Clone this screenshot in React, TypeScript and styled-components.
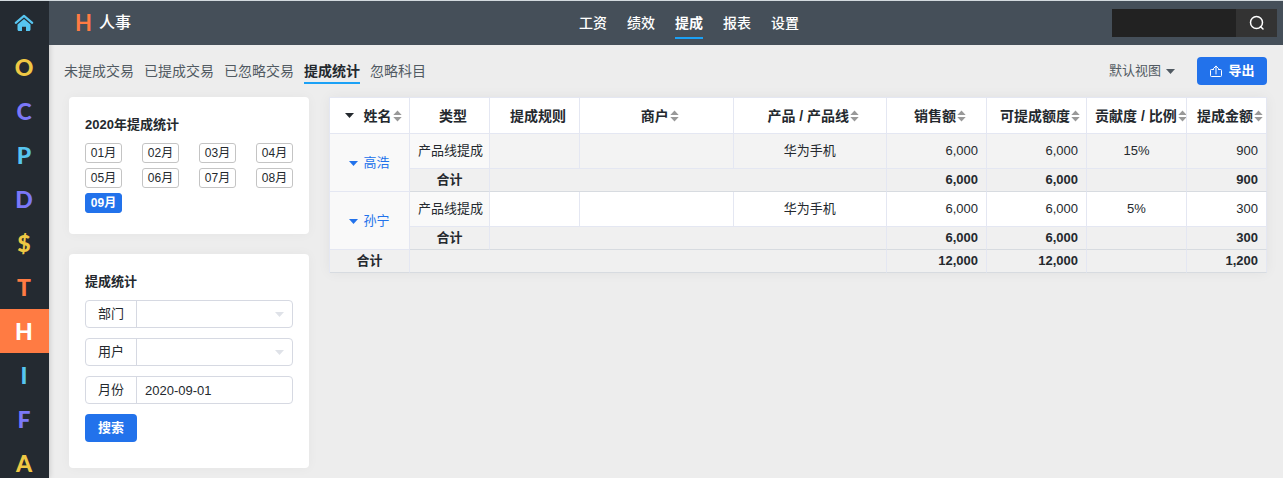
import React from 'react';
import styled, { createGlobalStyle, css } from 'styled-components';

const GlobalStyle = createGlobalStyle`
  *, *::before, *::after { box-sizing: border-box; }
  body {
    margin: 0;
    background: #ededed;
    color: #24292e;
    font: 13px/20px "Liberation Sans", "Noto Sans CJK SC", sans-serif;
  }
  button, input, select { font: inherit; color: inherit; margin: 0; }
  a { color: inherit; text-decoration: none; }
  h1, h2 { margin: 0; }
`;

const Shell = styled.div`
  display: flex;
  height: 100vh;
  overflow: hidden;
  border-top: 1px solid #d3dade;
`;

const Sidebar = styled.nav`
  flex: none;
  width: 49px;
  overflow: hidden;
  background: #242a31;
  box-shadow: 0 0 6px rgba(0, 0, 0, 0.2);
`;

const SideLink = styled.a<{ $color: string; $active?: boolean }>`
  display: flex;
  align-items: center;
  justify-content: center;
  height: 44px;
  padding-right: 1px;
  color: ${p => (p.$active ? '#fff' : p.$color)};
  background: ${p => (p.$active ? '#ff7b43' : 'transparent')};
  font: 900 23px/44px Lato, sans-serif;
`;

const Page = styled.div`
  flex: 1;
  min-width: 0;
  overflow: auto;
`;

const TopBar = styled.header`
  display: flex;
  align-items: center;
  height: 44px;
  padding-right: 6px;
  background: #454f59;
  color: #fff;
`;

const Brand = styled.div`
  display: flex;
  align-items: center;
  gap: 7px;
  flex: 0 0 217px;
  padding-left: 26px;
`;

const BrandMark = styled.span`
  color: #ff7b43;
  font: 700 22px/44px Lato, sans-serif;
`;

const BrandName = styled.h1`
  font-size: 16px;
  font-weight: 500;
  line-height: 24px;
`;

const TopNav = styled.nav`
  display: flex;
  flex: 1;
  justify-content: center;
  gap: 20px;
`;

const underline = css`
  border-bottom: 2px solid #1ba1f6;
  font-weight: 700;
`;

const TopLink = styled.a<{ $active?: boolean }>`
  height: 32px;
  font-size: 14px;
  font-weight: 500;
  line-height: 32px;
  white-space: nowrap;
  ${p => p.$active && underline}
`;

const Search = styled.form`
  display: flex;
  height: 28px;
`;

const SearchInput = styled.input`
  width: 124px;
  padding: 0 8px;
  border: 0;
  background: #222;
`;

const SearchButton = styled.button`
  display: flex;
  align-items: center;
  justify-content: center;
  width: 41px;
  padding: 0;
  border: 0;
  background: #333;
`;

const Toolbar = styled.div`
  display: flex;
  align-items: center;
  height: 52px;
  padding: 0 16px 0 15px;
`;

const Tabs = styled.nav`
  display: flex;
  flex: 1;
  gap: 10px;
`;

const Tab = styled.a<{ $active?: boolean }>`
  height: 26px;
  color: ${p => (p.$active ? '#24292e' : '#515a62')};
  font-size: 14px;
  line-height: 26px;
  white-space: nowrap;
  ${p => p.$active && underline}
`;

const ViewButton = styled.button`
  display: flex;
  align-items: center;
  gap: 5px;
  margin-right: 22px;
  padding: 0;
  border: 0;
  background: none;
  color: #515a62;
`;

const PrimaryButton = styled.button<{ $width: number }>`
  display: flex;
  align-items: center;
  justify-content: center;
  gap: 5px;
  width: ${p => p.$width}px;
  height: 28px;
  padding: 0;
  border: 0;
  border-radius: 4px;
  background: #2272eb;
  color: #fff;
  font-weight: 700;
`;

const Content = styled.main`
  display: flex;
  align-items: flex-start;
  gap: 20px;
  padding: 0 16px 10px 20px;
`;

const Aside = styled.aside`
  display: flex;
  flex-direction: column;
  gap: 20px;
  flex: none;
  width: 240px;
`;

const Card = styled.section<{ $bottom: number }>`
  padding: 16px 16px ${p => p.$bottom}px;
  border-radius: 4px;
  background: #fff;
  box-shadow: 0 0 12px rgba(0, 0, 0, 0.04);
`;

const CardTitle = styled.h2`
  margin-bottom: 6px;
  font-size: 13px;
  line-height: 24px;
`;

const Months = styled.div`
  display: flex;
  flex-wrap: wrap;
  gap: 5px 20px;
`;

const Month = styled.button<{ $active?: boolean }>`
  width: 37px;
  height: 20px;
  padding: 0;
  border: 1px solid ${p => (p.$active ? '#2272eb' : '#c4c4c4')};
  border-radius: 3px;
  background: ${p => (p.$active ? '#2272eb' : '#fff')};
  color: ${p => (p.$active ? '#fff' : '#24292e')};
  font-size: 12px;
  font-weight: ${p => (p.$active ? 700 : 400)};
  line-height: 18px;
`;

const Fields = styled.form`
  display: flex;
  flex-direction: column;
  align-items: stretch;
  gap: 10px;
`;

const Field = styled.div`
  display: flex;
  align-items: center;
  height: 28px;
  border: 1px solid #d6d9e2;
  border-radius: 4px;
`;

const FieldLabel = styled.label`
  width: 51px;
  border-right: 1px solid #d6d9e2;
  line-height: 26px;
  text-align: center;
`;

const TextInput = styled.input`
  flex: 1;
  min-width: 0;
  height: 26px;
  padding: 0 8px;
  border: 0;
  background: none;
`;

const SelectWrap = styled.div`
  display: grid;
  flex: 1;
  align-items: center;
  color: #dfe2e8;

  > * { grid-area: 1 / 1; }
  > svg { justify-self: end; margin-right: 8px; pointer-events: none; }
`;

const Select = styled.select`
  width: 100%;
  height: 26px;
  padding: 0 24px 0 8px;
  border: 0;
  background: none;
  color: #24292e;
  appearance: none;
`;

const Table = styled.table`
  flex: 1;
  width: 0;
  min-width: 880px;
  table-layout: fixed;
  border-collapse: separate;
  border-spacing: 0;
  border-left: 1px solid #e4e7f2;
  box-shadow: 0 0 12px rgba(0, 0, 0, 0.05);
`;

const Col = styled.col<{ $width?: number }>`
  width: ${p => (p.$width ? `${p.$width}px` : 'auto')};
`;

const HeadCell = styled.th`
  height: 37px;
  padding: 0 1px 0 8px;
  overflow: hidden;
  border: solid #e4e7f2;
  border-width: 1px 1px 1px 0;
  background: #fff;
  font-size: 14px;
  white-space: nowrap;
`;

const HeadContent = styled.span`
  display: flex;
  align-items: center;
  justify-content: safe center;
  gap: 1px;

  > svg { flex: none; }
`;

const HeadToggle = styled.button`
  display: flex;
  align-items: center;
  gap: 10px;
  padding: 0;
  border: 0;
  background: none;
`;

type Align = 'left' | 'center' | 'right';

const Cell = styled.td<{ $align?: Align; $bg?: string; $total?: boolean }>`
  height: ${p => (p.$total ? 23 : 35)}px;
  padding: 0 8px;
  border: solid #e4e7f2;
  border-width: 0 1px 1px 0;
  border-bottom-color: ${p => (p.$total ? '#d7dbe0' : '#e4e7f2')};
  background: ${p => (p.$total ? '#f0f0f0' : p.$bg || '#fff')};
  font-weight: ${p => (p.$total ? 700 : 400)};
  text-align: ${p => p.$align || 'center'};
  white-space: nowrap;
`;

const PersonButton = styled.button`
  display: inline-flex;
  align-items: center;
  gap: 5px;
  padding: 0;
  border: 0;
  background: none;
  color: #2272eb;
`;

const Caret = () => (
  <svg width="9" height="5" viewBox="0 0 9 5" fill="currentColor" aria-hidden="true">
    <path d="M0 0h9L4.500 5z" />
  </svg>
);

const Sort = () => (
  <svg width="9" height="12" viewBox="0 0 9 12" fill="#999" aria-hidden="true">
    <path d="M4.500 0.500L8.700 5H0.300zM0.300 7h8.400l-4.200 4.500z" />
  </svg>
);

const Home = () => (
  <svg width="20" height="18" viewBox="0 0 20 18" aria-hidden="true">
    <path d="M1.800 8.800L10 1.800l8.200 7" fill="none" stroke="#57c5f0" strokeWidth="2.200" strokeLinecap="round" strokeLinejoin="round" />
    <path d="M10 4.900l6.500 5.500v5.100c0 .9-.6 1.500-1.500 1.500h-3v-4.200H8V17H5c-.9 0-1.500-.6-1.500-1.500v-5.100z" fill="#57c5f0" />
  </svg>
);

const SearchIcon = () => (
  <svg width="16" height="16" viewBox="0 0 16 16" fill="none" stroke="#fff" strokeWidth="1.500" aria-hidden="true">
    <circle cx="7.500" cy="7.500" r="6" />
    <path d="M11.500 11.500l2.500 2.500" strokeLinecap="round" />
  </svg>
);

const ExportIcon = () => (
  <svg width="14" height="13" viewBox="0 0 14 13" fill="none" stroke="#fff" strokeLinecap="round" strokeLinejoin="round" aria-hidden="true">
    <path d="M4.500 4.500H2.500c-.8 0-1 .3-1 1v5c0 .7.300 1 1 1h9c.7 0 1-.3 1-1v-5c0-.7-.3-1-1-1h-2M7 9V1.200M4.500 3.500L7 1l2.500 2.500" />
  </svg>
);

const sideItems = [
  { text: 'O', color: '#efc844' },
  { text: 'C', color: '#7b78f8' },
  { text: 'P', color: '#57c5f0' },
  { text: 'D', color: '#7b78f8' },
  { text: '$', color: '#efc844' },
  { text: 'T', color: '#ff7b43' },
  { text: 'H', color: '#ff7b43' },
  { text: 'I', color: '#57c5f0' },
  { text: 'F', color: '#7b78f8' },
  { text: 'A', color: '#efc844' },
];

const months = ['01月', '02月', '03月', '04月', '05月', '06月', '07月', '08月', '09月'];
const widths = [80, 80, 90, undefined, undefined, 100, 100, 100, 80];

const headers = [
  { text: '类型' },
  { text: '提成规则' },
  { text: '商户', sort: true },
  { text: '产品 / 产品线', sort: true },
  { text: '销售额', sort: true },
  { text: '可提成额度', sort: true },
  { text: '贡献度 / 比例', sort: true },
  { text: '提成金额', sort: true },
];

const people = [
  { name: '高浩', sales: '6,000', base: '6,000', rate: '15%', amount: '900', bg: '#f3f3f3' },
  { name: '孙宁', sales: '6,000', base: '6,000', rate: '5%', amount: '300', bg: '#fff' },
];

export default function App() {
  return (
    <>
      <GlobalStyle />
      <Shell>
        <Sidebar>
          <SideLink href="#" $color="#57c5f0" aria-label="首页"><Home /></SideLink>
          {sideItems.map(i => (
            <SideLink key={i.text} href="#" $color={i.color} $active={i.text === 'H'}>{i.text}</SideLink>
          ))}
        </Sidebar>
        <Page>
          <TopBar>
            <Brand>
              <BrandMark>H</BrandMark>
              <BrandName>人事</BrandName>
            </Brand>
            <TopNav>
              {['工资', '绩效', '提成', '报表', '设置'].map(t => (
                <TopLink key={t} href="#" $active={t === '提成'}>{t}</TopLink>
              ))}
            </TopNav>
            <Search>
              <SearchInput type="text" aria-label="搜索" />
              <SearchButton type="button" aria-label="搜索"><SearchIcon /></SearchButton>
            </Search>
          </TopBar>
          <Toolbar>
            <Tabs>
              {['未提成交易', '已提成交易', '已忽略交易', '提成统计', '忽略科目'].map(t => (
                <Tab key={t} href="#" $active={t === '提成统计'}>{t}</Tab>
              ))}
            </Tabs>
            <ViewButton type="button">默认视图<Caret /></ViewButton>
            <PrimaryButton type="button" $width={70}><ExportIcon />导出</PrimaryButton>
          </Toolbar>
          <Content>
            <Aside>
              <Card $bottom={21}>
                <CardTitle>2020年提成统计</CardTitle>
                <Months>
                  {months.map(m => (
                    <Month key={m} type="button" $active={m === '09月'}>{m}</Month>
                  ))}
                </Months>
              </Card>
              <Card $bottom={26}>
                <CardTitle>提成统计</CardTitle>
                <Fields>
                  <Field>
                    <FieldLabel htmlFor="department">部门</FieldLabel>
                    <SelectWrap><Select id="department" /><Caret /></SelectWrap>
                  </Field>
                  <Field>
                    <FieldLabel htmlFor="user">用户</FieldLabel>
                    <SelectWrap><Select id="user" /><Caret /></SelectWrap>
                  </Field>
                  <Field>
                    <FieldLabel htmlFor="month">月份</FieldLabel>
                    <TextInput id="month" type="text" defaultValue="2020-09-01" />
                  </Field>
                  <PrimaryButton type="button" $width={52}>搜索</PrimaryButton>
                </Fields>
              </Card>
            </Aside>
            <Table>
              <colgroup>
                {widths.map((w, i) => <Col key={i} $width={w} />)}
              </colgroup>
              <thead>
                <tr>
                  <HeadCell scope="col">
                    <HeadContent>
                      <HeadToggle type="button"><Caret />姓名</HeadToggle>
                      <Sort />
                    </HeadContent>
                  </HeadCell>
                  {headers.map(h => (
                    <HeadCell key={h.text} scope="col">
                      <HeadContent>{h.text}{h.sort && <Sort />}</HeadContent>
                    </HeadCell>
                  ))}
                </tr>
              </thead>
              <tbody>
                {people.map(p => (
                  <React.Fragment key={p.name}>
                    <tr>
                      <Cell rowSpan={2} $bg="#f9f9f9">
                        <PersonButton type="button"><Caret />{p.name}</PersonButton>
                      </Cell>
                      <Cell $bg="#f9f9f9">产品线提成</Cell>
                      <Cell $bg={p.bg} />
                      <Cell $bg={p.bg} />
                      <Cell $bg={p.bg}>华为手机</Cell>
                      <Cell $bg={p.bg} $align="right">{p.sales}</Cell>
                      <Cell $bg={p.bg} $align="right">{p.base}</Cell>
                      <Cell $bg={p.bg}>{p.rate}</Cell>
                      <Cell $bg={p.bg} $align="right">{p.amount}</Cell>
                    </tr>
                    <tr>
                      <Cell $total>合计</Cell>
                      <Cell $total colSpan={3} />
                      <Cell $total $align="right">{p.sales}</Cell>
                      <Cell $total $align="right">{p.base}</Cell>
                      <Cell $total />
                      <Cell $total $align="right">{p.amount}</Cell>
                    </tr>
                  </React.Fragment>
                ))}
                <tr>
                  <Cell $total>合计</Cell>
                  <Cell $total colSpan={4} />
                  <Cell $total $align="right">12,000</Cell>
                  <Cell $total $align="right">12,000</Cell>
                  <Cell $total />
                  <Cell $total $align="right">1,200</Cell>
                </tr>
              </tbody>
            </Table>
          </Content>
        </Page>
      </Shell>
    </>
  );
}
